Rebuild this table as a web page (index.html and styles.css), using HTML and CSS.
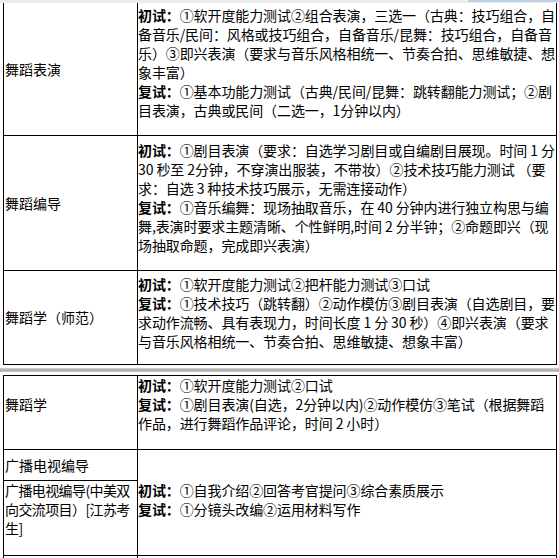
FILE: index.html
```html
<!DOCTYPE html>
<html lang="zh-CN">
<head>
<meta charset="utf-8">
<title>专业考试内容</title>
<link rel="stylesheet" href="styles.css">
</head>
<body>
<div class="topbar"><span class="topbar-hl"></span></div>

<div class="sheet sheet-a">
  <div class="cell lab">舞蹈表演</div>
  <div class="cell txt pad-3"><b>初试：</b>①软开度能力测试②组合表演，三选一（古典：技巧组合，自<br>备音乐/民间：风格或技巧组合，自备音乐/昆舞：技巧组合，自备音<br>乐）③即兴表演（要求与音乐风格相统一、节奏合拍、思维敏捷、想<br>象丰富）<br><b>复试：</b>①基本功能力测试（古典/民间/昆舞：跳转翻能力测试；②剧<br>目表演，古典或民间（二选一，1分钟以内）</div>

  <div class="cell lab">舞蹈编导</div>
  <div class="cell txt pad-5"><b>初试：</b>①剧目表演（要求：自选学习剧目或自编剧目展现。时间 1 分<br>30 秒至 2分钟，不穿演出服装，不带妆）②技术技巧能力测试 （要<br>求：自选 3 种技术技巧展示，无需连接动作）<br><b>复试：</b>①音乐编舞：现场抽取音乐，在 40 分钟内进行独立构思与编<br>舞,表演时要求主题清晰、个性鲜明,时间 2 分半钟；②命题即兴（现<br>场抽取命题，完成即兴表演）</div>

  <div class="cell lab">舞蹈学（师范）</div>
  <div class="cell txt pad-4"><b>初试：</b>①软开度能力测试②把杆能力测试③口试<br><b>复试：</b>①技术技巧（跳转翻）②动作模仿③剧目表演（自选剧目，要<br>求动作流畅、具有表现力，时间长度 1 分 30 秒）④即兴表演（要求<br>与音乐风格相统一、节奏合拍、思维敏捷、想象丰富）</div>
</div>

<div class="divider"></div>

<div class="sheet sheet-b">
  <div class="cell lab lab-top">舞蹈学</div>
  <div class="cell txt"><b>初试：</b>①软开度能力测试②口试<br><b>复试：</b>①剧目表演(自选，2分钟以内)②动作模仿③笔试（根据舞蹈<br>作品，进行舞蹈作品评论，时间 2 小时）</div>

  <div class="cell lab">广播电视编导</div>
  <div class="cell txt span-2 pad-31"><b>初试：</b>①自我介绍②回答考官提问③综合素质展示<br><b>复试：</b>①分镜头改编②运用材料写作</div>

  <div class="cell lab lab-wrap">广播电视编导(中美双<br>向交流项目）[江苏考<br>生]</div>

  <div class="cell"></div>
  <div class="cell"></div>
</div>
</body>
</html>
```

FILE: styles.css
```css
html, body {
  margin: 0;
  padding: 0;
  background: #ffffff;
  overflow: hidden;
}

body {
  width: 559px;
  height: 558px;
  font-family: "Noto Sans CJK SC", "Noto Sans", sans-serif;
  font-size: 14px;
  line-height: 19px;
  color: #000;
}

.topbar {
  height: 3px;
  background: #ececec;
  display: flex;
}

.topbar-hl {
  margin-left: auto;
  width: 91px;
  height: 2px;
  background: #b9d0e8;
}

.sheet {
  margin-left: 3px;
  width: 552px;
  display: grid;
  grid-template-columns: 133px 418px;
  gap: 1px;
  background: #000;
  border: 1px solid #000;
}

.sheet-a {
  border-top: none;
  grid-template-rows: 132px 134px 93px;
}

.sheet-b {
  grid-template-rows: 73px 30px 74px 12px;
}

.cell {
  background: #fff;
  white-space: nowrap;
  overflow: hidden;
}

.lab {
  display: flex;
  align-items: center;
  padding-left: 1px;
}

.lab-top {
  align-items: flex-start;
  padding-top: 19px;
}

.lab-wrap {
  align-items: flex-start;
  letter-spacing: -0.6px;
}

.txt {
  letter-spacing: -0.1px;
}

.txt b {
  font-weight: bold;
}

.pad-3 { padding-top: 3px; }
.pad-4 { padding-top: 4px; }
.pad-5 { padding-top: 5px; }
.pad-31 { padding-top: 31px; }

.span-2 {
  grid-row: span 2;
}

.divider {
  height: 10px;
  display: flex;
  flex-direction: column;
  justify-content: center;
}

.divider::before {
  content: "";
  display: block;
  height: 4px;
  background: linear-gradient(#d4d4d4, #a9a9a9 50%, #c9c9c9);
}
```
